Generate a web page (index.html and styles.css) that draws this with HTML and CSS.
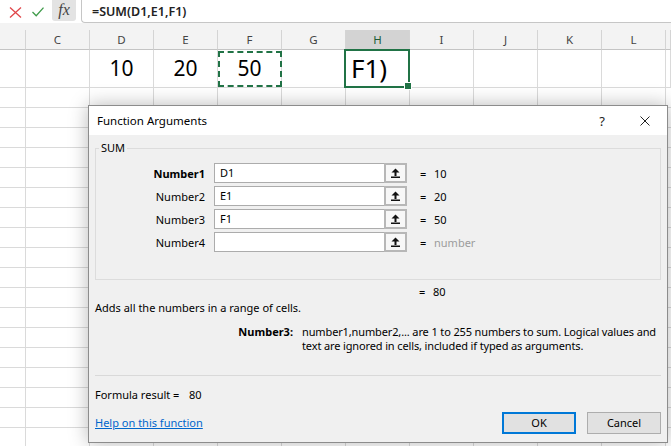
FILE: index.html
```html
<!DOCTYPE html>
<html lang="en">
<head>
<meta charset="utf-8">
<title>Function Arguments</title>
<link rel="stylesheet" href="styles.css">
</head>
<body>
<div class="fbar">
  <div class="fbar-tools">
    <svg class="ico-cancel" viewBox="0 0 13 11"><path d="M1 0.5 L12 10.5 M12 0.5 L1 10.5" /></svg>
    <svg class="ico-enter" viewBox="0 0 12 10"><path d="M0.5 5 L4.2 8.8 L11.5 0.6" /></svg>
    <div class="fx">fx</div>
  </div>
  <div class="finput">=SUM(D1,E1,F1)</div>
</div>
<div class="band"></div>
<div class="colhead">
  <div></div><div>C</div><div>D</div><div>E</div><div>F</div><div>G</div><div class="sel">H</div><div>I</div><div>J</div><div>K</div><div>L</div><div></div>
</div>
<div class="row1">
  <div></div><div></div><div>10</div><div>20</div><div class="marquee">50</div><div></div><div class="edit">F1)</div><div></div><div></div><div></div><div></div><div></div>
</div>
<div class="rows"></div>

<div class="dialog">
  <div class="titlebar">
    <span class="title">Function Arguments</span>
    <span class="tb-q">?</span>
    <svg class="tb-close" viewBox="0 0 10 10"><path d="M0.5 0.5 L9.5 9.5 M9.5 0.5 L0.5 9.5" /></svg>
  </div>
  <div class="dbody">
    <fieldset class="group">
      <legend>SUM</legend>
      <div class="args">
        <div class="arg">
          <span class="arg-label strong">Number1</span>
          <span class="arg-box"><span class="arg-text">D1</span><span class="ref-btn"><svg viewBox="0 0 9 10"><path d="M4.5 0.5 L8.5 4.5 L0.5 4.5 Z M3.5 4.5 H5.5 V8 H3.5 Z M0 8.6 H9 V10 H0 Z" /></svg></span></span>
          <span class="arg-eq">=</span><span class="arg-val">10</span>
        </div>
        <div class="arg">
          <span class="arg-label">Number2</span>
          <span class="arg-box"><span class="arg-text">E1</span><span class="ref-btn"><svg viewBox="0 0 9 10"><path d="M4.5 0.5 L8.5 4.5 L0.5 4.5 Z M3.5 4.5 H5.5 V8 H3.5 Z M0 8.6 H9 V10 H0 Z" /></svg></span></span>
          <span class="arg-eq">=</span><span class="arg-val">20</span>
        </div>
        <div class="arg">
          <span class="arg-label">Number3</span>
          <span class="arg-box"><span class="arg-text">F1</span><span class="ref-btn"><svg viewBox="0 0 9 10"><path d="M4.5 0.5 L8.5 4.5 L0.5 4.5 Z M3.5 4.5 H5.5 V8 H3.5 Z M0 8.6 H9 V10 H0 Z" /></svg></span></span>
          <span class="arg-eq">=</span><span class="arg-val">50</span>
        </div>
        <div class="arg">
          <span class="arg-label">Number4</span>
          <span class="arg-box"><span class="arg-text"></span><span class="ref-btn"><svg viewBox="0 0 9 10"><path d="M4.5 0.5 L8.5 4.5 L0.5 4.5 Z M3.5 4.5 H5.5 V8 H3.5 Z M0 8.6 H9 V10 H0 Z" /></svg></span></span>
          <span class="arg-eq">=</span><span class="arg-val hint">number</span>
        </div>
      </div>
    </fieldset>
    <div class="total"><span class="arg-eq">=</span><span>80</span></div>
    <div class="desc">Adds all the numbers in a range of cells.</div>
    <div class="argdesc">
      <b class="argdesc-name">Number3:</b>
      <span class="argdesc-text">number1,number2,... are 1 to 255 numbers to sum. Logical values and text are ignored in cells, included if typed as arguments.</span>
    </div>
    <div class="sep"></div>
    <div class="result"><span class="result-label">Formula result =</span>80</div>
    <div class="footer">
      <a class="help" href="#">Help on this function</a>
      <button class="btn ok">OK</button>
      <button class="btn">Cancel</button>
    </div>
  </div>
</div>
</body>
</html>
```
FILE: styles.css
```css
* { box-sizing: border-box; }

body {
  margin: 0;
  width: 671px;
  height: 446px;
  overflow: hidden;
  background: #fff;
  font-family: "Noto Sans", "Liberation Sans", sans-serif;
  position: relative;
}

/* formula bar */
.fbar {
  display: flex;
  height: 23px;
  background: #fff;
}
.fbar-tools {
  width: 81px;
  display: flex;
  align-items: flex-start;
}
.ico-cancel {
  width: 13px;
  height: 11px;
  margin: 7px 0 0 9px;
  fill: none;
  stroke: #e0464a;
  stroke-width: 1.3;
}
.ico-enter {
  width: 12px;
  height: 10px;
  margin: 7px 0 0 10px;
  fill: none;
  stroke: #3f9b4a;
  stroke-width: 1.3;
}
.fx {
  width: 24px;
  height: 21px;
  margin-left: 8px;
  background: #e3e3e3;
  border-radius: 0 0 3px 3px;
  font-family: "Liberation Serif", serif;
  font-style: italic;
  font-size: 16px;
  line-height: 20px;
  text-align: center;
  color: #444;
}
.finput {
  flex: 1;
  border-left: 1px solid #c6c6c6;
  border-bottom: 1px solid #c6c6c6;
  border-bottom-left-radius: 4px;
  padding: 3px 0 0 10px;
  font-size: 12.5px;
  font-weight: 600;
  line-height: 18px;
  color: #222;
}
.band {
  height: 7px;
  background: #f3f3f3;
}

/* sheet */
.colhead, .row1 {
  display: grid;
  grid-template-columns: 26px repeat(10, 64px) 1fr;
}
.colhead {
  height: 20px;
  background: #f3f3f3;
}
.colhead > div {
  border-right: 1px solid #d4d4d4;
  border-bottom: 1px solid #c4c4c4;
  text-align: center;
  font-size: 11.5px;
  line-height: 19px;
  color: #444;
}
.colhead > .sel {
  background: #d3d3d3;
  color: #1e5b38;
}
.row1 {
  height: 38px;
}
.row1 > div {
  position: relative;
  border-right: 1px solid #dadada;
  border-bottom: 1px solid #dadada;
  font-size: 21px;
  line-height: 37px;
  text-align: center;
  color: #000;
}
.row1 > .edit {
  text-align: left;
  padding-left: 5px;
  font-size: 26px;
}
.row1 > .marquee::after {
  content: "";
  position: absolute;
  inset: 1px -1px 0 0;
  border: 2px dashed #217346;
}
.row1 > .edit::after {
  content: "";
  position: absolute;
  inset: -1px -1px -1px -2px;
  border: 2px solid #217346;
}
.row1 > .edit::before {
  content: "";
  position: absolute;
  right: -3px;
  bottom: -3px;
  width: 6px;
  height: 6px;
  background: #217346;
  border: 1px solid #fff;
  z-index: 1;
}
.rows {
  height: 358px;
  background:
    linear-gradient(to right, transparent 63px, #dadada 63px) 26px 0 / 64px 100% repeat-x,
    linear-gradient(to bottom, transparent 19px, #dadada 19px) 0 0 / 100% 20px repeat-y;
}

/* dialog */
.dialog {
  position: absolute;
  left: 88px;
  top: 105px;
  width: 580px;
  height: 338px;
  border: 1px solid #8c8c8c;
  background: #f0f0f0;
  box-shadow: 0 0 18px rgba(0, 0, 0, 0.28);
  display: flex;
  flex-direction: column;
  font-size: 11px;
  color: #000;
}
.titlebar {
  height: 29px;
  flex: none;
  background: #fff;
  display: flex;
  align-items: center;
  padding-left: 8px;
}
.title {
  flex: 1;
  font-size: 11.5px;
}
.tb-q {
  font-size: 13px;
  margin-right: 35px;
  color: #222;
}
.tb-close {
  width: 10px;
  height: 10px;
  margin-right: 17px;
  fill: none;
  stroke: #222;
  stroke-width: 1;
}
.dbody {
  padding: 0 6px 7px 6px;
  display: flex;
  flex-direction: column;
}
.group {
  margin: 6px 0 0;
  padding: 8px 0 27px 3px;
  border: 1px solid #dcdcdc;
  min-width: 0;
}
.group legend {
  padding: 0 2px;
  line-height: 14px;
}
.args {
  display: flex;
  flex-direction: column;
  gap: 3px;
}
.arg {
  display: flex;
  align-items: center;
  height: 20px;
}
.arg-label {
  width: 106px;
  text-align: right;
}
.strong { font-weight: 700; }
.arg-box {
  margin-left: 9px;
  width: 193px;
  height: 20px;
  display: flex;
  border: 1px solid #acacac;
  background: #fff;
}
.arg-text {
  flex: 1;
  padding-left: 5px;
  line-height: 18px;
}
.ref-btn {
  width: 23px;
  margin: -1px -1px -1px 0;
  border: 2px solid #b7b7b7;
  background: #f7f7f7;
  display: flex;
  align-items: center;
  justify-content: center;
}
.ref-btn svg {
  width: 9px;
  height: 10px;
  fill: #111;
}
.arg-eq {
  width: 14px;
  margin-left: 13px;
}
.hint { color: #9c9c9c; }
.total {
  margin-top: 5px;
  padding-left: 311px;
  display: flex;
  line-height: 14px;
}
.desc {
  margin-top: 2px;
  line-height: 14px;
}
.argdesc {
  margin-top: 10px;
  display: flex;
  line-height: 14px;
}
.argdesc-name {
  flex: none;
  width: 198px;
  text-align: right;
}
.argdesc-text {
  margin-left: 9px;
  width: 360px;
  letter-spacing: -0.13px;
}
.sep {
  margin-top: 22px;
  border-top: 1px solid #d9d9d9;
}
.result {
  margin-top: 12px;
  line-height: 14px;
}
.result-label {
  display: inline-block;
  width: 94px;
}
.footer {
  margin-top: 10px;
  display: flex;
  align-items: center;
}
.help {
  flex: 1;
  color: #0066cc;
  text-decoration: underline;
  line-height: 14px;
}
.btn {
  width: 74px;
  height: 22px;
  margin-left: 11px;
  padding: 0;
  background: #e1e1e1;
  border: 1px solid #adadad;
  font-family: inherit;
  font-size: 11px;
  color: #000;
  line-height: 20px;
}
.btn.ok {
  margin-left: 0;
  border: 2px solid #0078d7;
  line-height: 18px;
}
```
